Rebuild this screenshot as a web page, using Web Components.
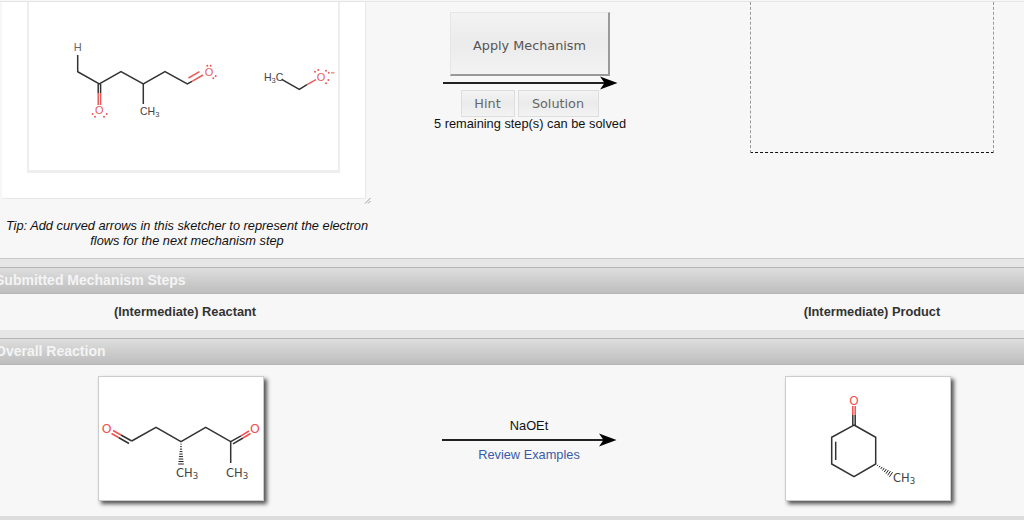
<!DOCTYPE html>
<html>
<head>
<meta charset="utf-8">
<title>Mechanism</title>
<style>
    html, body { margin: 0; height: 100%; overflow: hidden; background: #f7f7f7; }
    body { font-family: "Liberation Sans", Arial, sans-serif; font-size: 12.8px; color: #222; }
</style>
</head>
<body>
<mech-page></mech-page>

<script>
function hashBond(x1, y1, x2, y2, n, maxW) {
    const dx = x2 - x1, dy = y2 - y1, len = Math.hypot(dx, dy);
    const nx = -dy / len, ny = dx / len;
    let out = '';
    for (let i = 1; i <= n; i++) {
        const t = i / n, w = maxW * t / 2 + 0.3;
        const cx = x1 + dx * t, cy = y1 + dy * t;
        out += `<line x1="${cx - nx * w}" y1="${cy - ny * w}" x2="${cx + nx * w}" y2="${cy + ny * w}" stroke-width="1"/>`;
    }
    return out;
}
function dots(list) {
    return list.map(p => `<circle cx="${p[0]}" cy="${p[1]}" r="1" fill="#e85a5a"/>`).join('');
}
const CH3 = (x, y, size) => `<text x="${x}" y="${y}" font-size="${size}">CH<tspan dy="2" font-size="${size * 0.75}">3</tspan></text>`;

const MOLECULES = {
    sketch: { box: '29 2 309 168', body: `
        <g fill="none" stroke="#333" stroke-width="1.5">
            <path d="M77.7 55 V71.7 L99.3 84 L121 71.7 L143.3 84 L165 71.7 L187.3 84 L192 81.3"/>
            <path d="M143.3 84 V104"/>
            <path d="M98.2 84 V93 M100.6 84 V93"/>
            <path d="M281.7 79.3 L299.3 89.3 L307 84.6"/>
        </g>
        <g fill="none" stroke="#e85a5a" stroke-width="1.5">
            <path d="M98.2 93 V105 M100.6 93 V105"/>
            <path d="M192 81.3 L203 75 M188.5 78 L199.5 71.7"/>
            <path d="M307 84.6 L316 79.6"/>
        </g>
        <text x="77.7" y="51" fill="#666" font-size="11" text-anchor="middle">H</text>
        <text x="140" y="115" font-size="10.5" fill="#444">CH<tspan dy="2" font-size="7.5">3</tspan></text>
        <text x="264" y="80.5" font-size="10.5" fill="#444">H<tspan dy="2" font-size="7.5">3</tspan><tspan dy="-2">C</tspan></text>
        <g fill="#e85a5a" font-size="11" text-anchor="middle">
            <text x="209" y="76">O</text>
            <text x="99.3" y="114">O</text>
            <text x="321" y="80.5">O</text>
        </g>
        <rect x="331" y="72.4" width="3.5" height="1" fill="#e85a5a"/>
        ${dots([[207.3,65.7],[210.7,65.7],[213.3,78.3],[215.7,76],[92.7,114],[95,116.7],[106.7,114],[104,116.7],
                [315,71.7],[318.3,70],[326,70.7],[328.7,72.7],[328.3,80],[326,83.3]])}` },
    reactant: { box: '99 377 164 123', body: `
        <g fill="none" stroke="#333" stroke-width="1.5">
            <path d="M131.7 441 L156 427.3 L181 441.7 L205.7 427.3 L230.7 441.7 V463"/>
            <path d="M131.7 441 L121 435 M129 443.5 L118.5 437.5"/>
            <path d="M230.7 441.7 L241 435.8 M233 443.8 L243 438"/>
            ${hashBond(181, 441.7, 181, 464, 9, 5)}
        </g>
        <g fill="none" stroke="#f05050" stroke-width="1.5">
            <path d="M121 435 L113 430.5 M118.5 437.5 L111.5 433.5"/>
            <path d="M241 435.8 L249 431 M243 438 L250.5 433.5"/>
        </g>
        <g fill="#f05050" font-family="DejaVu Sans" font-size="12.5" text-anchor="middle">
            <text x="106.7" y="433.3">O</text>
            <text x="255" y="433.3">O</text>
        </g>
        <g fill="#444" font-family="DejaVu Sans">
            ${CH3(176, 477, 11.5)}
            ${CH3(226, 477, 11.5)}
        </g>` },
    product: { box: '786 377 164 123', body: `
        <g fill="none" stroke="#333" stroke-width="1.5">
            <path d="M854 425 L875.7 437.3 V464 L854 476.7 L831.7 464 V437.3 Z"/>
            <path d="M835.7 441.7 V460"/>
            <path d="M852.8 425 V415 M855.2 425 V415"/>
            ${hashBond(875.7, 464, 891, 474.5, 8, 5)}
        </g>
        <path d="M852.8 415 V406 M855.2 415 V406" fill="none" stroke="#f05050" stroke-width="1.5"/>
        <text x="854" y="405" fill="#f05050" font-family="DejaVu Sans" font-size="12" text-anchor="middle">O</text>
        <g fill="#444" font-family="DejaVu Sans">${CH3(893, 482, 11.5)}</g>` }
};

class MolView extends HTMLElement {
    constructor() {
        super();
        this.attachShadow({ mode: 'open' });
    }
    connectedCallback() {
        const mol = MOLECULES[this.getAttribute('name')];
        const [, , w, h] = mol.box.split(' ');
        this.shadowRoot.innerHTML = `
            <style>
                :host { display: block; }
                svg { display: block; font-family: "Liberation Sans", Arial, sans-serif; }
                g[fill="none"] line { stroke: #222; }
            </style>
            <svg width="${w}" height="${h}" viewBox="${mol.box}">${mol.body}</svg>`;
    }
}
customElements.define('mol-view', MolView);

class MolCard extends HTMLElement {
    constructor() {
        super();
        this.attachShadow({ mode: 'open' });
        this.shadowRoot.innerHTML = `
            <style>
                :host {
                    display: block; width: 164px; height: 123px;
                    background: #fff; border: 1px solid #ccc;
                    box-shadow: 3px 3px 4px #555;
                }
            </style>
            <slot></slot>`;
    }
}
customElements.define('mol-card', MolCard);

class ReactionArrow extends HTMLElement {
    constructor() {
        super();
        this.attachShadow({ mode: 'open' });
        this.shadowRoot.innerHTML = `
            <style>:host { display: block; width: 175px; height: 14px; } svg { display: block; }</style>
            <svg width="175" height="14" viewBox="0 0 175 14">
                <rect x="0" y="6" width="165" height="2" fill="#222"/>
                <path d="M174.5 7 L157 0.5 L161.5 7 L157 13.5 Z" fill="#000"/>
            </svg>`;
    }
}
customElements.define('reaction-arrow', ReactionArrow);

class ToolButton extends HTMLElement {
    constructor() {
        super();
        this.attachShadow({ mode: 'open' });
        this.shadowRoot.innerHTML = `
            <style>
                :host {
                    display: flex; align-items: center; justify-content: center;
                    box-sizing: border-box;
                    font: 12.8px "DejaVu Sans", Verdana, sans-serif; color: #666;
                    background: linear-gradient(#f3f3f3, #ebebeb 50%, #f3f3f3);
                    border: 1px solid #ddd;
                }
                :host([primary]) {
                    color: #555;
                    padding-top: 3px;
                    border-color: #e6e6e6;
                    border-right: 2px solid #999;
                    border-bottom: 2px solid #999;
                }
            </style>
            <slot></slot>`;
    }
}
customElements.define('tool-button', ToolButton);

class SketchPane extends HTMLElement {
    constructor() {
        super();
        this.attachShadow({ mode: 'open' });
        this.shadowRoot.innerHTML = `
            <style>
                :host {
                    display: block; position: relative; box-sizing: border-box;
                    width: 364px; height: 197px; margin-left: 2px;
                    background: #fff; border-right: 1px solid #e8e8e8; border-bottom: 1px solid #e8e8e8;
                }
                .inner {
                    box-sizing: border-box; width: 313px; height: 171px; margin-left: 25px;
                    border: 2px solid #eee; border-top: 0; border-bottom-width: 3px;
                }
                .grip { position: absolute; right: -6px; bottom: -6px; display: block; }
            </style>
            <div class="inner"><slot></slot></div>
            <svg class="grip" width="7" height="7" viewBox="0 0 7 7">
                <path d="M1 6.5 L6.5 1 M4 6.5 L6.5 4" stroke="#888" stroke-width="0.8" fill="none"/>
            </svg>`;
    }
}
customElements.define('sketch-pane', SketchPane);

class PanelHead extends HTMLElement {
    constructor() {
        super();
        this.attachShadow({ mode: 'open' });
        this.shadowRoot.innerHTML = `
            <style>
                :host {
                    display: flex; align-items: center; box-sizing: border-box; height: 27px;
                    padding-bottom: 2px;
                    background: linear-gradient(#dedede, #bdbdbd);
                    border-top: 1px solid #b5b5b5; border-bottom: 1px solid #b5b5b5;
                    color: #f4f4f4; font: bold 14px "Liberation Sans", Arial, sans-serif;
                }
                span { margin-left: -5px; white-space: nowrap; }
            </style>
            <span><slot></slot></span>`;
    }
}
customElements.define('panel-head', PanelHead);

class MechPage extends HTMLElement {
    constructor() {
        super();
        this.attachShadow({ mode: 'open' });
        this.shadowRoot.innerHTML = `
            <style>
                :host { display: block; width: 1024px; height: 520px; overflow: hidden; background: #f7f7f7; }
                .top {
                    display: grid; grid-template-columns: 374px 312px 1fr;
                    box-sizing: border-box; height: 258px;
                    border-top: 1px solid #e5e5e5; border-bottom: 1px solid #c8c8c8;
                    margin-top: 1px;
                }
                .tip {
                    margin-top: 19px; text-align: center; font-style: italic;
                    font-size: 12.8px; line-height: 15px; color: #111;
                }
                .mid { display: flex; flex-direction: column; align-items: center; }
                .apply { width: 160px; height: 64px; margin-top: 10px; }
                .btns { display: flex; gap: 3px; margin-left: -1px; }
                .hint { width: 54px; height: 27px; }
                .sol { width: 81px; height: 27px; }
                .remaining { color: #111; line-height: 14px; white-space: nowrap; }
                .drop {
                    box-sizing: border-box; width: 244px; height: 151px; margin-left: 64px;
                    border: 1px dashed #999; border-top: 0; border-bottom-color: #111;
                }
                .band { height: 8px; background: #e6e6e6; }
                .cols { display: grid; grid-template-columns: 362px 334px 1fr; }
                .labels { height: 36px; padding-bottom: 2px; box-sizing: border-box; align-items: center; font-weight: bold; color: #333; }
                .labels div { text-align: center; }
                .labels .r { margin-left: 24px; }
                .labels .l { margin-left: 8px; }
                .reaction { height: 151px; padding-top: 11px; box-sizing: border-box; }
                .reaction .c1 { justify-self: center; }
                .reaction .c2 { display: flex; flex-direction: column; align-items: center; padding-top: 43px; color: #111; }
                .reaction .c3 { margin-left: 89px; }
                .reagent { line-height: 14px; }
                .link { color: #3b5ca8; line-height: 14px; margin-top: 1px; }
                .end { height: 4px; background: #dcdcdc; }
            </style>
            <section class="top">
                <div>
                    <sketch-pane><mol-view name="sketch"></mol-view></sketch-pane>
                    <div class="tip">Tip: Add curved arrows in this sketcher to represent the electron<br>flows for the next mechanism step</div>
                </div>
                <div class="mid">
                    <tool-button class="apply" primary>Apply Mechanism</tool-button>
                    <reaction-arrow></reaction-arrow>
                    <div class="btns">
                        <tool-button class="hint">Hint</tool-button>
                        <tool-button class="sol">Solution</tool-button>
                    </div>
                    <div class="remaining">5 remaining step(s) can be solved</div>
                </div>
                <div><div class="drop"></div></div>
            </section>
            <div class="band"></div>
            <panel-head>Submitted Mechanism Steps</panel-head>
            <div class="cols labels">
                <div class="l">(Intermediate) Reactant</div>
                <div></div>
                <div class="r">(Intermediate) Product</div>
            </div>
            <div class="band"></div>
            <panel-head>Overall Reaction</panel-head>
            <div class="cols reaction">
                <mol-card class="c1"><mol-view name="reactant"></mol-view></mol-card>
                <div class="c2">
                    <div class="reagent">NaOEt</div>
                    <reaction-arrow></reaction-arrow>
                    <div class="link">Review Examples</div>
                </div>
                <mol-card class="c3"><mol-view name="product"></mol-view></mol-card>
            </div>
            <div class="end"></div>`;
    }
}
customElements.define('mech-page', MechPage);
</script>
</body>
</html>
